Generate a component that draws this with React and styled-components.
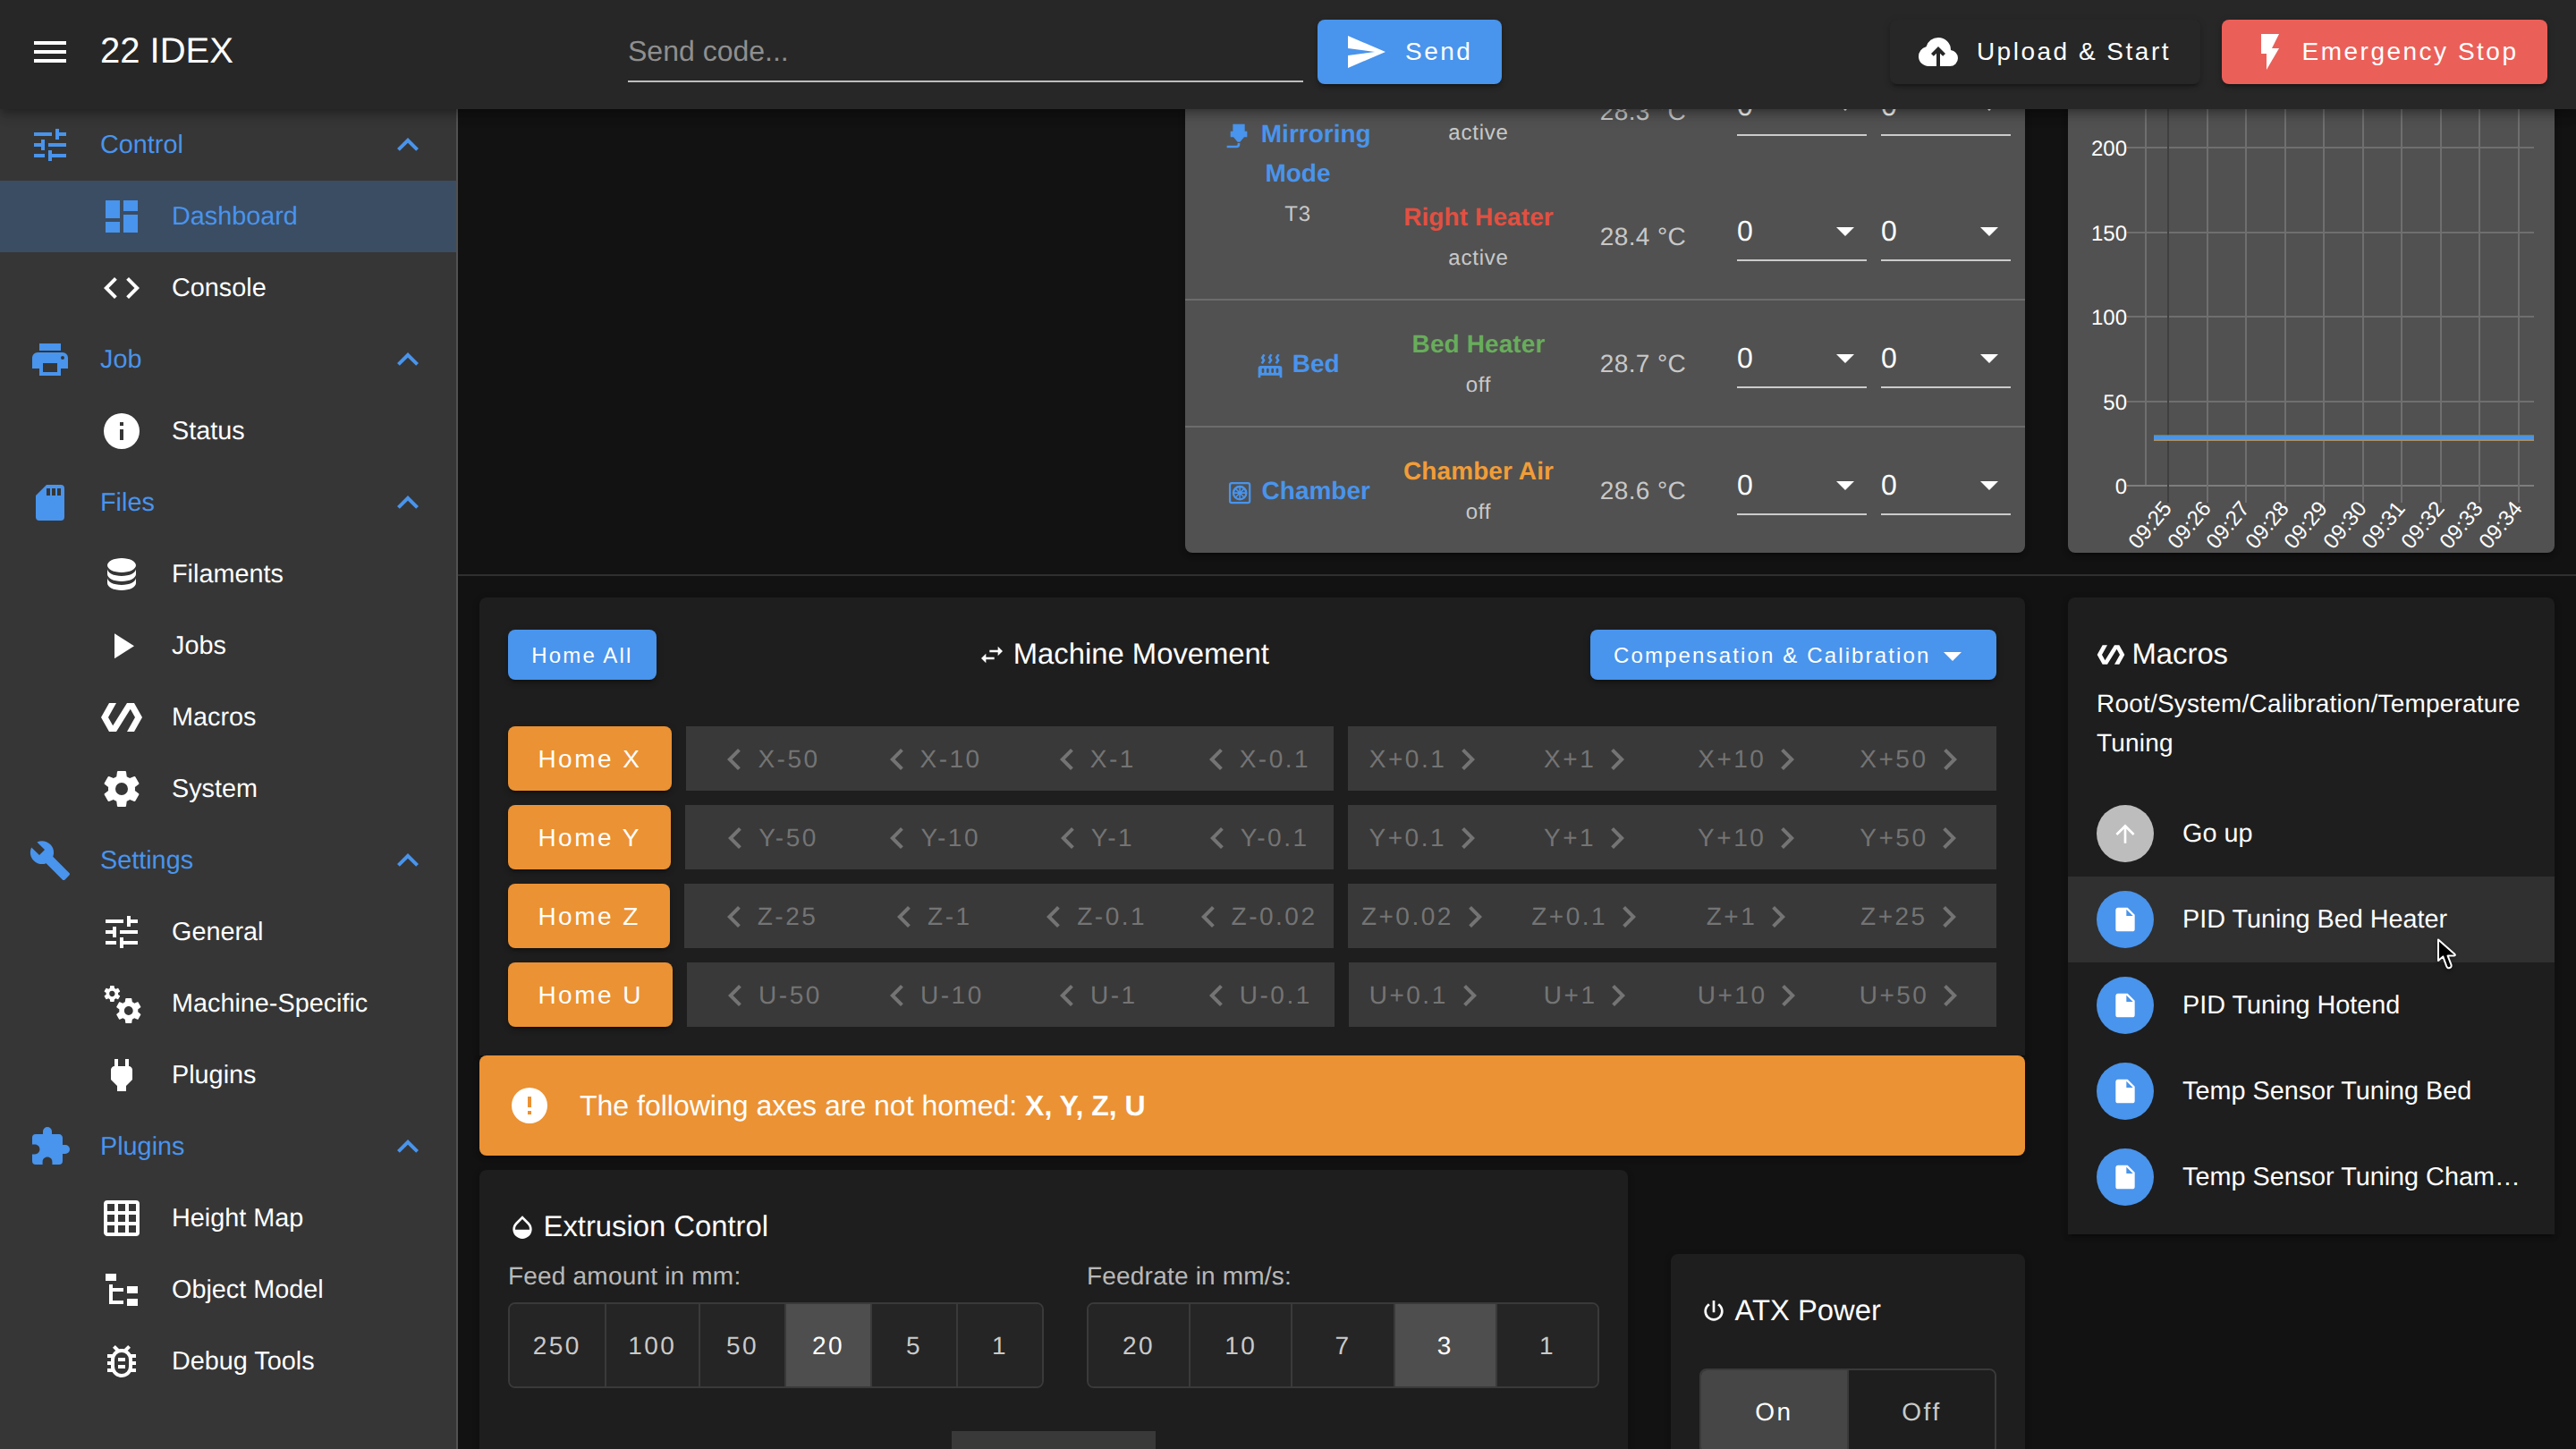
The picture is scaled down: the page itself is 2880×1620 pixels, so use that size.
import React from 'react';
import styled, { createGlobalStyle, css } from 'styled-components';

const color = {
  blue: '#4994ec',
  orange: '#eb9234',
  red: '#eb5f59',
  page: '#121212',
  card: '#1e1e1e',
  panel: '#515151',
  bar: '#272727',
  drawer: '#363636',
  soft: 'rgba(255,255,255,0.7)',
};

const lift = css`
  box-shadow: 0 6px 2px -4px rgba(0, 0, 0, 0.2), 0 4px 4px 0 rgba(0, 0, 0, 0.14),
    0 2px 10px 0 rgba(0, 0, 0, 0.12);
`;

const GlobalStyle = createGlobalStyle`
  *, *::before, *::after { box-sizing: border-box; }
  html, body { margin: 0; padding: 0; background: ${color.page}; overflow: hidden; }
  body {
    font-family: Helvetica, "Liberation Sans", Arial, sans-serif;
    color: #fff;
    font-size: 28px;
    text-rendering: geometricPrecision;
    -webkit-font-smoothing: antialiased;
  }
`;

/* ---------- icons ---------- */

const paths = {
  menu: 'M3,6H21V8H3V6M3,11H21V13H3V11M3,16H21V18H3V16Z',
  send: 'M2,21L23,12L2,3V10L17,12L2,14V21Z',
  cloud:
    'M11 20H6.5Q4.22 20 2.61 18.43 1 16.85 1 14.58 1 12.63 2.17 11.1 3.35 9.57 5.25 9.15 5.88 6.85 7.75 5.43 9.63 4 12 4 14.93 4 16.96 6.04 19 8.07 19 11 20.73 11.2 21.86 12.5 23 13.78 23 15.5 23 17.38 21.69 18.69 20.38 20 18.5 20H13V12.85L14.6 14.4L16 13L12 9L8 13L9.4 14.4L11 12.85Z',
  flash: 'M7,2V13H10V22L17,10H13L17,2H7Z',
  tune: 'M3,17V19H9V17H3M3,5V7H13V5H3M13,21V19H21V17H13V15H11V21H13M7,9V11H3V13H7V15H9V9H7M21,13V11H11V13H21M15,9H17V7H21V5H17V3H15V9Z',
  dashboard: 'M13,3V9H21V3M13,21H21V11H13M3,21H11V15H3M3,13H11V3H3V13Z',
  code: 'M14.6,16.6L19.2,12L14.6,7.4L16,6L22,12L16,18L14.6,16.6M9.4,16.6L4.8,12L9.4,7.4L8,6L2,12L8,18L9.4,16.6Z',
  printer:
    'M18,3H6V7H18M19,12A1,1 0 0,1 18,11A1,1 0 0,1 19,10A1,1 0 0,1 20,11A1,1 0 0,1 19,12M16,19H8V14H16M19,8H5A3,3 0 0,0 2,11V17H6V21H18V17H22V11A3,3 0 0,0 19,8Z',
  info: 'M13,9H11V7H13M13,17H11V11H13M12,2A10,10 0 0,0 2,12A10,10 0 0,0 12,22A10,10 0 0,0 22,12A10,10 0 0,0 12,2Z',
  sd: 'M18,8H16V4H18M15,8H13V4H15M12,8H10V4H12M18,2H10L4,8V20A2,2 0 0,0 6,22H18A2,2 0 0,0 20,20V4A2,2 0 0,0 18,2Z',
  database:
    'M12,3C7.58,3 4,4.79 4,7C4,9.21 7.58,11 12,11C16.42,11 20,9.21 20,7C20,4.79 16.42,3 12,3M4,9V12C4,14.21 7.58,16 12,16C16.42,16 20,14.21 20,12V9C20,11.21 16.42,13 12,13C7.58,13 4,11.21 4,9M4,14V17C4,19.21 7.58,21 12,21C16.42,21 20,19.21 20,17V14C20,16.21 16.42,18 12,18C7.58,18 4,16.21 4,14Z',
  play: 'M8,5.14V19.14L19,12.14L8,5.14Z',
  polymer:
    'M19,4H15L7.1,16.63L4.5,12L9,4H5L0.5,12L5,20H9L16.9,7.37L19.5,12L15,20H19L23.5,12L19,4Z',
  cog: 'M12,15.5A3.5,3.5 0 0,1 8.5,12A3.5,3.5 0 0,1 12,8.5A3.5,3.5 0 0,1 15.5,12A3.5,3.5 0 0,1 12,15.5M19.43,12.97C19.47,12.65 19.5,12.33 19.5,12C19.5,11.67 19.47,11.34 19.43,11L21.54,9.37C21.73,9.22 21.78,8.95 21.66,8.73L19.66,5.27C19.54,5.05 19.27,4.96 19.05,5.05L16.56,6.05C16.04,5.66 15.5,5.32 14.87,5.07L14.5,2.42C14.46,2.18 14.25,2 14,2H10C9.75,2 9.54,2.18 9.5,2.42L9.13,5.07C8.5,5.32 7.96,5.66 7.44,6.05L4.95,5.05C4.73,4.96 4.46,5.05 4.34,5.27L2.34,8.73C2.21,8.95 2.27,9.22 2.46,9.37L4.57,11C4.53,11.34 4.5,11.67 4.5,12C4.5,12.33 4.53,12.65 4.57,12.97L2.46,14.63C2.27,14.78 2.21,15.05 2.34,15.27L4.34,18.73C4.46,18.95 4.73,19.03 4.95,18.95L7.44,17.94C7.96,18.34 8.5,18.68 9.13,18.93L9.5,21.58C9.54,21.82 9.75,22 10,22H14C14.25,22 14.46,21.82 14.5,21.58L14.87,18.93C15.5,18.67 16.04,18.34 16.56,17.94L19.05,18.95C19.27,19.03 19.54,18.95 19.66,18.73L21.66,15.27C21.78,15.05 21.73,14.78 21.54,14.63L19.43,12.97Z',
  wrench:
    'M22.7,19L13.6,9.9C14.5,7.6 14,4.9 12.1,3C10.1,1 7.1,0.6 4.7,1.7L9,6L6,9L1.6,4.7C0.4,7.1 0.9,10.1 2.9,12.1C4.8,14 7.5,14.5 9.8,13.6L18.9,22.7C19.3,23.1 19.9,23.1 20.3,22.7L22.6,20.4C23.1,20 23.1,19.3 22.7,19Z',
  cogs: 'M15.9,18.45C17.25,18.45 18.35,17.35 18.35,16C18.35,14.65 17.25,13.55 15.9,13.55C14.54,13.55 13.45,14.65 13.45,16C13.45,17.35 14.54,18.45 15.9,18.45M21.1,16.68L22.58,17.84C22.71,17.95 22.75,18.13 22.66,18.29L21.26,20.71C21.17,20.86 21,20.92 20.83,20.86L19.09,20.16C18.73,20.44 18.33,20.67 17.91,20.85L17.64,22.7C17.62,22.87 17.47,23 17.3,23H14.5C14.32,23 14.18,22.87 14.15,22.7L13.89,20.85C13.46,20.67 13.07,20.44 12.71,20.16L10.96,20.86C10.81,20.92 10.62,20.86 10.54,20.71L9.14,18.29C9.05,18.13 9.09,17.95 9.22,17.84L10.7,16.68L10.65,16L10.7,15.31L9.22,14.16C9.09,14.05 9.05,13.86 9.14,13.71L10.54,11.29C10.62,11.13 10.81,11.07 10.96,11.13L12.71,11.84C13.07,11.56 13.46,11.32 13.89,11.15L14.15,9.29C14.18,9.13 14.32,9 14.5,9H17.3C17.47,9 17.62,9.13 17.64,9.29L17.91,11.15C18.33,11.32 18.73,11.56 19.09,11.84L20.83,11.13C21,11.07 21.17,11.13 21.26,11.29L22.66,13.71C22.75,13.86 22.71,14.05 22.58,14.16L21.1,15.31L21.15,16L21.1,16.68M6.69,8.07C7.56,8.07 8.26,7.37 8.26,6.5C8.26,5.63 7.56,4.92 6.69,4.92A1.58,1.58 0 0,0 5.11,6.5C5.11,7.37 5.82,8.07 6.69,8.07M10.03,6.94L11,7.68C11.07,7.75 11.09,7.87 11.03,7.97L10.13,9.53C10.08,9.63 9.96,9.67 9.86,9.63L8.74,9.18L8,9.62L7.81,10.81C7.79,10.92 7.7,11 7.59,11H5.79C5.67,11 5.58,10.92 5.56,10.81L5.4,9.62L4.64,9.18L3.52,9.63C3.41,9.67 3.3,9.63 3.24,9.53L2.34,7.97C2.28,7.87 2.31,7.75 2.39,7.68L3.34,6.94L3.31,6.5L3.34,6.06L2.39,5.32C2.31,5.25 2.28,5.13 2.34,5.03L3.24,3.47C3.3,3.37 3.41,3.33 3.52,3.37L4.63,3.82L5.4,3.38L5.56,2.19C5.58,2.08 5.67,2 5.79,2H7.59C7.7,2 7.79,2.08 7.81,2.19L8,3.38L8.74,3.82L9.86,3.37C9.96,3.33 10.08,3.37 10.13,3.47L11.03,5.03C11.09,5.13 11.07,5.25 11,5.32L10.03,6.06L10.06,6.5L10.03,6.94Z',
  plug: 'M16,7V3H14V7H10V3H8V7H8C7,7 6,8 6,9V14.5L9.5,18V21H14.5V18L18,14.5V9C18,8 17,7 16,7Z',
  puzzle:
    'M20.5,11H19V7C19,5.89 18.1,5 17,5H13V3.5A2.5,2.5 0 0,0 10.5,1A2.5,2.5 0 0,0 8,3.5V5H4A2,2 0 0,0 2,7V10.8H3.5C5,10.8 6.2,12 6.2,13.5C6.2,15 5,16.2 3.5,16.2H2V20A2,2 0 0,0 4,22H7.8V20.5C7.8,19 9,17.8 10.5,17.8C12,17.8 13.2,19 13.2,20.5V22H17A2,2 0 0,0 19,20V16H20.5A2.5,2.5 0 0,0 23,13.5A2.5,2.5 0 0,0 20.5,11Z',
  grid: 'M10,4V8H14V4H10M16,4V8H20V4H16M16,10V14H20V10H16M16,16V20H20V16H16M14,20V16H10V20H14M8,20V16H4V20H8M8,14V10H4V14H8M8,8V4H4V8H8M10,14H14V10H10V14M4,2H20A2,2 0 0,1 22,4V20A2,2 0 0,1 20,22H4C2.92,22 2,21.1 2,20V4A2,2 0 0,1 4,2Z',
  tree: 'M3,3H9V7H3V3M15,10H21V14H15V10M15,17H21V21H15V17M13,13H7V18H13V20H7L5,20V9H7V11H13V13Z',
  bug: 'M20,8H17.19C16.74,7.2 16.12,6.5 15.37,6L17,4.41L15.59,3L13.42,5.17C12.96,5.06 12.5,5 12,5C11.5,5 11.05,5.06 10.59,5.17L8.41,3L7,4.41L8.62,6C7.87,6.5 7.26,7.21 6.81,8H4V10H6.09C6.03,10.33 6,10.66 6,11V12H4V14H6V15C6,15.34 6.03,15.67 6.09,16H4V18H6.81C8.47,20.87 12.14,21.84 15,20.18C15.91,19.66 16.67,18.9 17.19,18H20V16H17.91C17.97,15.67 18,15.34 18,15V14H20V12H18V11C18,10.66 17.97,10.33 17.91,10H20V8M16,15A4,4 0 0,1 12,19A4,4 0 0,1 8,15V11A4,4 0 0,1 12,7A4,4 0 0,1 16,11V15M14,10V12H10V10H14M10,14H14V16H10V14Z',
  up: 'M7.41,15.41L12,10.83L16.59,15.41L18,14L12,8L6,14L7.41,15.41Z',
  left: 'M15.41,16.58L10.83,12L15.41,7.41L14,6L8,12L14,18L15.41,16.58Z',
  right: 'M8.59,16.58L13.17,12L8.59,7.41L10,6L16,12L10,18L8.59,16.58Z',
  caret: 'M7,10L12,15L17,10H7Z',
  swap: 'M21,9L17,5V8H10V10H17V13M7,11L3,15L7,19V16H14V14H7V11Z',
  alert:
    'M13,13H11V7H13M13,17H11V15H13M12,2A10,10 0 0,0 2,12A10,10 0 0,0 12,22A10,10 0 0,0 22,12A10,10 0 0,0 12,2Z',
  drop: 'M17.66,8L12,2.35L6.34,8C4.78,9.56 4,11.64 4,13.64C4,15.64 4.78,17.75 6.34,19.31C7.9,20.87 9.95,21.66 12,21.66C14.05,21.66 16.1,20.87 17.66,19.31C19.22,17.75 20,15.64 20,13.64C20,11.64 19.22,9.56 17.66,8M6,14C6,12 6.62,10.73 7.76,9.6L12,5.27L16.24,9.65C17.38,10.77 18,12 18,14H6Z',
  power:
    'M16.56,5.44L15.11,6.89C16.84,7.94 18,9.83 18,12A6,6 0 0,1 12,18A6,6 0 0,1 6,12C6,9.83 7.16,7.94 8.88,6.88L7.44,5.44C5.36,6.88 4,9.28 4,12A8,8 0 0,0 12,20A8,8 0 0,0 20,12C20,9.28 18.64,6.88 16.56,5.44M13,3H11V13H13',
  arrowUp: 'M13,20H11V8L5.5,13.5L4.08,12.08L12,4.16L19.92,12.08L18.5,13.5L13,8V20Z',
  file: 'M13,9V3.5L18.5,9M6,2C4.89,2 4,2.89 4,4V20A2,2 0 0,0 6,22H18A2,2 0 0,0 20,20V8L14,2H6Z',
  nozzle:
    'M7,2H17V8H19V13H16.5L13,17H11L7.5,13H5V8H7V2M10,22H2V20H10A1,1 0 0,0 11,19V18H13V19A3,3 0 0,1 10,22Z',
  radiator:
    'M7.95,3L6.53,5.19L7.95,7.4H7.94L5.95,10.5L4.22,9.6L5.64,7.39L4.22,5.19L6.22,2.09L7.95,3M13.95,2.89L12.53,5.1L13.95,7.3L13.94,7.31L11.95,10.4L10.22,9.5L11.64,7.3L10.22,5.1L12.22,2L13.95,2.89M20,2.89L18.56,5.1L20,7.3V7.31L18,10.4L16.25,9.5L17.67,7.3L16.25,5.1L18.25,2L20,2.89M2,22V14A2,2 0 0,1 4,12H20A2,2 0 0,1 22,14V22H20V20H4V22H2M6,14A1,1 0 0,0 5,15V17A1,1 0 0,0 6,18A1,1 0 0,0 7,17V15A1,1 0 0,0 6,14M10,14A1,1 0 0,0 9,15V17A1,1 0 0,0 10,18A1,1 0 0,0 11,17V15A1,1 0 0,0 10,14M14,14A1,1 0 0,0 13,15V17A1,1 0 0,0 14,18A1,1 0 0,0 15,17V15A1,1 0 0,0 14,14M18,14A1,1 0 0,0 17,15V17A1,1 0 0,0 18,18A1,1 0 0,0 19,17V15A1,1 0 0,0 18,14Z',
};

const Svg = styled.svg`
  width: ${(p) => p.$size}px;
  height: ${(p) => p.$size}px;
  flex: none;
  fill: currentColor;
  display: block;
`;

const Icon = ({ name, size = 48, className }) => (
  <Svg $size={size} viewBox="0 0 24 24" className={className}>
    {name === 'chamber' ? (
      <g fill="none" stroke="currentColor">
        <rect x="3.8" y="3.8" width="16.6" height="16.6" rx="1.6" strokeWidth="1.7" />
        <circle cx="12.1" cy="12.1" r="5.4" strokeWidth="1.8" />
        <path
          strokeWidth="1.2"
          d="M12.1 6.7V17.5M6.7 12.1H17.5M8.3 8.3L15.9 15.9M15.9 8.3L8.3 15.9"
        />
      </g>
    ) : (
      <path d={paths[name]} />
    )}
  </Svg>
);

/* ---------- app bar ---------- */

const Page = styled.div`
  width: 2880px;
  height: 1620px;
  overflow: hidden;
  display: flex;
  flex-direction: column;
  background: ${color.page};
`;

const AppBar = styled.header`
  flex: none;
  height: 122px;
  padding: 0 32px 6px;
  display: flex;
  align-items: center;
  background: ${color.bar};
  z-index: 2;
  box-shadow: 0 4px 8px -2px rgba(0, 0, 0, 0.2), 0 8px 10px 0 rgba(0, 0, 0, 0.14),
    0 2px 20px 0 rgba(0, 0, 0, 0.12);
`;

const MachineName = styled.h1`
  margin: 0 0 0 32px;
  padding-bottom: 2px;
  flex: 0 0 590px;
  font-size: 40px;
  font-weight: 400;
  line-height: 1;
`;

const CodeField = styled.div`
  width: 755px;
  height: 68px;
  display: flex;
  align-items: center;
  border-bottom: 2px solid rgba(255, 255, 255, 0.7);
  color: #8f8f8f;
  font-size: 32px;
`;

const Button = styled.button`
  height: ${(p) => p.$height || 72}px;
  padding: 1px ${(p) => p.$pad ?? 33}px 0;
  border: 0;
  border-radius: 8px;
  display: inline-flex;
  align-items: center;
  justify-content: center;
  white-space: nowrap;
  font: 400 ${(p) => p.$font || 28}px/1 'Liberation Sans', Arial, sans-serif;
  letter-spacing: 0.0892857em;
  color: #fff;
  background: ${(p) => p.$bg};
  ${lift}
`;

const BarButton = styled(Button)`
  padding: 0 32.5px 0 30px;
  gap: ${(p) => p.$gap}px;
`;

const SendButton = styled(BarButton)`
  margin-left: 16px;
`;

const BarActions = styled.div`
  margin-left: auto;
  display: flex;
  gap: 24px;
`;

/* ---------- drawer ---------- */

const Body = styled.div`
  flex: 1;
  min-height: 0;
  display: flex;
`;

const Drawer = styled.nav`
  flex: 0 0 512px;
  border-right: 2px solid #515151;
  background: ${color.drawer};
`;

const NavRow = styled.a`
  height: 80px;
  padding: 0 30px 0 ${(p) => (p.$group ? 32 : 112)}px;
  display: flex;
  align-items: center;
  gap: 32px;
  font-size: 28.8px;
  line-height: 1;
  color: ${(p) => (p.$group || p.$active ? color.blue : '#fff')};
  background: ${(p) => (p.$active ? '#3b4d63' : 'transparent')};
`;

const NavLabel = styled.span`
  flex: 1;
`;

const nav = [
  { icon: 'tune', label: 'Control', group: true },
  { icon: 'dashboard', label: 'Dashboard', active: true },
  { icon: 'code', label: 'Console' },
  { icon: 'printer', label: 'Job', group: true },
  { icon: 'info', label: 'Status' },
  { icon: 'sd', label: 'Files', group: true },
  { icon: 'database', label: 'Filaments' },
  { icon: 'play', label: 'Jobs' },
  { icon: 'polymer', label: 'Macros' },
  { icon: 'cog', label: 'System' },
  { icon: 'wrench', label: 'Settings', group: true },
  { icon: 'tune', label: 'General' },
  { icon: 'cogs', label: 'Machine-Specific' },
  { icon: 'plug', label: 'Plugins' },
  { icon: 'puzzle', label: 'Plugins', group: true },
  { icon: 'grid', label: 'Height Map' },
  { icon: 'tree', label: 'Object Model' },
  { icon: 'bug', label: 'Debug Tools' },
];

/* ---------- main ---------- */

const Main = styled.main`
  flex: 1;
  min-width: 0;
  overflow: hidden;
`;

/* The status area is scrolled partly under the app bar. */
const StatusRow = styled.section`
  margin-top: -68px;
  padding: 0 24px 24px;
  height: 590px;
  display: flex;
  justify-content: flex-end;
  gap: 48px;
  border-bottom: 2px solid #2f2f2f;
`;

const Panel = styled.div`
  background: ${color.panel};
  border-radius: 0 0 8px 8px;
  ${lift}
`;

const ToolsPanel = styled(Panel)`
  width: 939px;
`;

const ChartPanel = styled(Panel)`
  width: 544px;
`;

const ToolRow = styled.div`
  display: grid;
  grid-template-columns: 240px 1fr;
  & + & {
    border-top: 2px solid #6c6c6c;
  }
`;

const ToolCell = styled.div`
  padding: 2px 22px 0 34px;
  display: flex;
  flex-direction: column;
  justify-content: center;
  text-align: center;
  line-height: 44px;
`;

const ToolName = styled.div`
  font-weight: 700;
  color: ${color.blue};
`;

const InlineIcon = styled(Icon)`
  display: inline-block;
  vertical-align: -9px;
  margin-right: 8.5px;
`;

const Caption = styled.div`
  padding-top: 2px;
  font-size: 24px;
  letter-spacing: 0.8px;
  color: ${color.soft};
`;

const HeaterRow = styled.div`
  height: 140px;
  display: grid;
  grid-template-columns: 176px 201px 145px 16px 145px;
  align-items: center;
  text-align: center;
  line-height: 44px;
`;

const HeaterCell = styled.div`
  padding-top: 3px;
  white-space: nowrap;
`;

const HeaterName = styled.div`
  font-weight: 700;
  letter-spacing: 0.1px;
  color: ${(p) => p.$color};
`;

const Reading = styled.div`
  padding: 1px 9px 0 0;
  letter-spacing: 0.4px;
  color: ${color.soft};
`;

const Setpoint = styled.div`
  grid-column: ${(p) => p.$col};
  height: 56px;
  padding-bottom: 10px;
  display: flex;
  align-items: center;
  justify-content: space-between;
  border-bottom: 2px solid rgba(255, 255, 255, 0.7);
  font-size: 32px;
`;

const tools = [
  {
    icon: 'nozzle',
    name: 'Mirroring Mode',
    sub: 'T3',
    heaters: [
      { name: 'Left Heater', color: '#4994ec', state: 'active', temp: '28.3 °C' },
      { name: 'Right Heater', color: '#e25041', state: 'active', temp: '28.4 °C' },
    ],
  },
  {
    icon: 'radiator',
    name: 'Bed',
    heaters: [{ name: 'Bed Heater', color: '#68ad5b', state: 'off', temp: '28.7 °C' }],
  },
  {
    icon: 'chamber',
    name: 'Chamber',
    heaters: [{ name: 'Chamber Air', color: '#f19d38', state: 'off', temp: '28.6 °C' }],
  },
];

const ChartSvg = styled.svg`
  display: block;
  width: 544px;
  height: 564px;
  font: 24px 'Liberation Sans', Arial, sans-serif;
  fill: #fff;
`;

const times = [25, 26, 27, 28, 29, 30, 31, 32, 33, 34];

const Chart = () => (
  <ChartSvg viewBox="0 0 544 564">
    {[200, 150, 100, 50, 0].map((v) => {
      const y = Math.round(489 - v * 1.89);
      return (
        <g key={v}>
          <path d={`M66 ${y}H521`} stroke={v ? '#6f6f6f' : '#7d7d7d'} strokeWidth="2" />
          <text x="66" y={y + 9} textAnchor="end">
            {v}
          </text>
        </g>
      );
    })}
    <path d="M87 0V488" stroke="#6f6f6f" strokeWidth="2" />
    {times.map((t, i) => {
      const x = Math.round(112 + i * 43.5);
      return (
        <g key={t}>
          <path d={`M${x} 0V508`} stroke={i ? '#6f6f6f' : '#3f3f3f'} strokeWidth="2" />
          <text
            transform={`translate(${x - 1} 510) rotate(-50)`}
            textAnchor="end"
            y="8"
          >
            {`09:${t}`}
          </text>
        </g>
      );
    })}
    <path d="M96 433.2H521" stroke="#6f8f6c" strokeWidth="2" />
    <path d="M96 437.6H521" stroke="#b08f5c" strokeWidth="2.6" />
    <path d="M96 435.4H521" stroke={color.blue} strokeWidth="4.2" />
  </ChartSvg>
);

const ControlArea = styled.section`
  padding: 24px;
  display: flex;
  align-items: flex-start;
  gap: 48px;
`;

const ControlColumn = styled.div`
  flex: 0 0 1728px;
`;

const Card = styled.div`
  padding: 32px;
  background: ${color.card};
  border-radius: 8px;
  ${lift}
`;

const MovementCard = styled(Card)`
  border-radius: 8px 8px 0 0;
`;

const CardTitle = styled.h2`
  margin: 0;
  padding-bottom: 1px;
  height: 64px;
  display: flex;
  align-items: center;
  gap: 7.5px;
  font-size: 32.8px;
  font-weight: 400;
  line-height: 1;
  white-space: nowrap;
`;

const MovementHeader = styled.div`
  margin-bottom: 48px;
  display: flex;
  align-items: center;
  justify-content: space-between;
`;

const AxisRow = styled.div`
  display: flex;
  gap: 16px;
  & + & {
    margin-top: 16px;
  }
`;

const StepGroup = styled.div`
  flex: 1 1 0;
  height: 72px;
  display: grid;
  grid-template-columns: repeat(4, minmax(0, 1fr));
  background: #393939;
`;

const Step = styled.div`
  padding: 1px ${(p) => (p.$back ? 1 : 0)}px 0 0;
  display: flex;
  align-items: center;
  justify-content: center;
  gap: ${(p) => (p.$back ? 2 : 0)}px;
  white-space: nowrap;
  letter-spacing: 0.0892857em;
  color: #747474;
`;

const axes = [
  { axis: 'X', steps: ['50', '10', '1', '0.1'] },
  { axis: 'Y', steps: ['50', '10', '1', '0.1'] },
  { axis: 'Z', steps: ['25', '1', '0.1', '0.02'] },
  { axis: 'U', steps: ['50', '10', '1', '0.1'] },
];

const Alert = styled.div`
  height: 112px;
  padding: 0 32px;
  display: flex;
  align-items: center;
  gap: 32px;
  border-radius: 8px;
  background: ${color.orange};
  font-size: 32px;
  line-height: 48px;
  ${lift}
`;

const LowerRow = styled.div`
  margin-top: 16px;
  display: flex;
  align-items: flex-start;
  gap: 48px;
`;

const ExtrusionCard = styled(Card)`
  flex: 0 0 1284px;
  height: 420px;
`;

const AtxCard = styled(Card)`
  flex: 0 0 396px;
  margin-top: 94px;
  height: 320px;
`;

const FeedRow = styled.div`
  display: flex;
  gap: 48px;
`;

const FeedLabel = styled.div`
  height: 44px;
  margin-bottom: 8px;
  line-height: 46px;
  letter-spacing: 0.2px;
  color: ${color.soft};
`;

const Toggle = styled.div`
  height: 96px;
  width: ${(p) => p.$width}px;
  display: flex;
  overflow: hidden;
  border: 2px solid #3a3a3a;
  border-radius: 8px;
`;

const ToggleItem = styled.div`
  flex: ${(p) => p.$grow || 1} 1 0;
  padding-top: 1px;
  display: flex;
  align-items: center;
  justify-content: center;
  letter-spacing: 0.0892857em;
  color: ${(p) => (p.$on ? '#fff' : '#cacaca')};
  background: ${(p) => (p.$on ? p.$onBg || '#4e4e4e' : p.$offBg || '#252525')};
  & + & {
    border-left: 2px solid #3a3a3a;
  }
`;

const ExtrudeStub = styled.div`
  width: 228px;
  height: 72px;
  margin: 48px auto 0;
  background: #393939;
`;

const AtxToggle = styled(Toggle)`
  margin-top: 32px;
`;

const MacrosCard = styled(Card)`
  flex: 0 0 544px;
  width: 544px;
  min-width: 0;
  padding: 32px 0 16px;
  border-radius: 8px 8px 0 0;
`;

const MacrosHead = styled.div`
  padding: 0 32px 16px;
`;

const MacroPath = styled.div`
  padding-top: 1px;
  height: 88px;
  line-height: 44px;
  letter-spacing: 0.2px;
`;

const MacroRow = styled.div`
  height: 96px;
  padding: 0 32px;
  display: flex;
  align-items: center;
  gap: 32px;
  font-size: 28.8px;
  background: ${(p) => (p.$hover ? '#303030' : 'transparent')};
`;

const MacroList = styled.div`
  padding-top: 16px;
`;

const Avatar = styled.div`
  flex: 0 0 64px;
  height: 64px;
  border-radius: 50%;
  display: grid;
  place-items: center;
  background: ${(p) => p.$bg};
`;

const MacroName = styled.span`
  flex: 1;
  min-width: 0;
  overflow: hidden;
  text-overflow: ellipsis;
  white-space: nowrap;
  line-height: 40px;
`;

const macros = [
  'PID Tuning Bed Heater',
  'PID Tuning Hotend',
  'Temp Sensor Tuning Bed',
  'Temp Sensor Tuning Chamber',
];

const Pointer = styled.svg`
  position: absolute;
  left: 2721px;
  top: 1045px;
  width: 32px;
  height: 44px;
  filter: drop-shadow(0 2px 2px rgba(0, 0, 0, 0.4));
`;

export default function App() {
  return (
    <>
      <GlobalStyle />
      <Page>
        <AppBar>
          <Icon name="menu" />
          <MachineName>22 IDEX</MachineName>
          <CodeField>Send code...</CodeField>
          <SendButton $bg={color.blue} $gap={20}>
            <Icon name="send" />
            Send
          </SendButton>
          <BarActions>
            <BarButton $bg="#272727" $gap={18.5}>
              <Icon name="cloud" />
              Upload &amp; Start
            </BarButton>
            <BarButton $bg={color.red} $gap={12}>
              <Icon name="flash" />
              Emergency Stop
            </BarButton>
          </BarActions>
        </AppBar>

        <Body>
          <Drawer>
            {nav.map((n) => (
              <NavRow key={n.label + n.icon} $group={n.group} $active={n.active}>
                <Icon name={n.icon} />
                <NavLabel>{n.label}</NavLabel>
                {n.group && <Icon name="up" />}
              </NavRow>
            ))}
          </Drawer>

          <Main>
            <StatusRow>
              <ToolsPanel>
                {tools.map((t) => (
                  <ToolRow key={t.name}>
                    <ToolCell>
                      <ToolName>
                        <InlineIcon name={t.icon} size={32} />
                        {t.name}
                      </ToolName>
                      {t.sub && <Caption>{t.sub}</Caption>}
                    </ToolCell>
                    <div>
                      {t.heaters.map((h) => (
                        <HeaterRow key={h.name}>
                          <HeaterCell>
                            <HeaterName $color={h.color}>{h.name}</HeaterName>
                            <Caption>{h.state}</Caption>
                          </HeaterCell>
                          <Reading>{h.temp}</Reading>
                          <Setpoint $col={3}>
                            0<Icon name="caret" />
                          </Setpoint>
                          <Setpoint $col={5}>
                            0<Icon name="caret" />
                          </Setpoint>
                        </HeaterRow>
                      ))}
                    </div>
                  </ToolRow>
                ))}
              </ToolsPanel>
              <ChartPanel>
                <Chart />
              </ChartPanel>
            </StatusRow>

            <ControlArea>
              <ControlColumn>
                <MovementCard>
                  <MovementHeader>
                    <Button $bg={color.blue} $height={56} $font={24} $pad={26.3}>
                      Home All
                    </Button>
                    <CardTitle>
                      <Icon name="swap" size={32} />
                      Machine Movement
                    </CardTitle>
                    <Button $bg={color.blue} $height={56} $font={24} $pad={25.5}>
                      Compensation &amp; Calibration
                      <Icon name="caret" />
                    </Button>
                  </MovementHeader>
                  {axes.map(({ axis, steps }) => (
                    <AxisRow key={axis}>
                      <Button $bg={color.orange} $pad={33.4}>
                        Home {axis}
                      </Button>
                      <StepGroup>
                        {steps.map((s) => (
                          <Step key={s} $back>
                            <Icon name="left" />
                            {`${axis}-${s}`}
                          </Step>
                        ))}
                      </StepGroup>
                      <StepGroup>
                        {[...steps].reverse().map((s) => (
                          <Step key={s}>
                            {`${axis}+${s}`}
                            <Icon name="right" />
                          </Step>
                        ))}
                      </StepGroup>
                    </AxisRow>
                  ))}
                </MovementCard>

                <Alert>
                  <Icon name="alert" />
                  <span>
                    The following axes are not homed: <b>X, Y, Z, U</b>
                  </span>
                </Alert>

                <LowerRow>
                  <ExtrusionCard>
                    <CardTitle>
                      <Icon name="drop" size={32} />
                      Extrusion Control
                    </CardTitle>
                    <FeedRow>
                      <div>
                        <FeedLabel>Feed amount in mm:</FeedLabel>
                        <Toggle $width={599}>
                          <ToggleItem $grow={105.5}>250</ToggleItem>
                          <ToggleItem $grow={103.5}>100</ToggleItem>
                          <ToggleItem $grow={94}>50</ToggleItem>
                          <ToggleItem $grow={94} $on>
                            20
                          </ToggleItem>
                          <ToggleItem $grow={94}>5</ToggleItem>
                          <ToggleItem $grow={94}>1</ToggleItem>
                        </Toggle>
                      </div>
                      <div>
                        <FeedLabel>Feedrate in mm/s:</FeedLabel>
                        <Toggle $width={573}>
                          <ToggleItem>20</ToggleItem>
                          <ToggleItem>10</ToggleItem>
                          <ToggleItem>7</ToggleItem>
                          <ToggleItem $on>3</ToggleItem>
                          <ToggleItem>1</ToggleItem>
                        </Toggle>
                      </div>
                    </FeedRow>
                    <ExtrudeStub />
                  </ExtrusionCard>

                  <AtxCard>
                    <CardTitle>
                      <Icon name="power" size={32} />
                      ATX Power
                    </CardTitle>
                    <AtxToggle $width={332}>
                      <ToggleItem $on $onBg="#464646">
                        On
                      </ToggleItem>
                      <ToggleItem $offBg={color.card}>Off</ToggleItem>
                    </AtxToggle>
                  </AtxCard>
                </LowerRow>
              </ControlColumn>

              <MacrosCard>
                <MacrosHead>
                  <CardTitle>
                    <Icon name="polymer" size={32} />
                    Macros
                  </CardTitle>
                  <MacroPath>Root/System/Calibration/Temperature Tuning</MacroPath>
                </MacrosHead>
                <MacroList>
                  <MacroRow>
                    <Avatar $bg="#bdbdbd">
                      <Icon name="arrowUp" size={32} />
                    </Avatar>
                    <MacroName>Go up</MacroName>
                  </MacroRow>
                  {macros.map((m, i) => (
                    <MacroRow key={m} $hover={i === 0}>
                      <Avatar $bg={color.blue}>
                        <Icon name="file" size={32} />
                      </Avatar>
                      <MacroName>{m}</MacroName>
                    </MacroRow>
                  ))}
                </MacroList>
              </MacrosCard>
            </ControlArea>
          </Main>
        </Body>
      </Page>
      <Pointer viewBox="0 0 32 44">
        <path
          d="M5 5.5V29L10.3 24.4L14.2 35.2Q15.3 38 17.8 37Q20.4 36 19.3 33.2L15.6 23.6H22.8Q24.6 23.4 23.4 21.8Z"
          fill="#000"
          stroke="#fff"
          strokeWidth="2"
          strokeLinejoin="round"
        />
      </Pointer>
    </>
  );
}
